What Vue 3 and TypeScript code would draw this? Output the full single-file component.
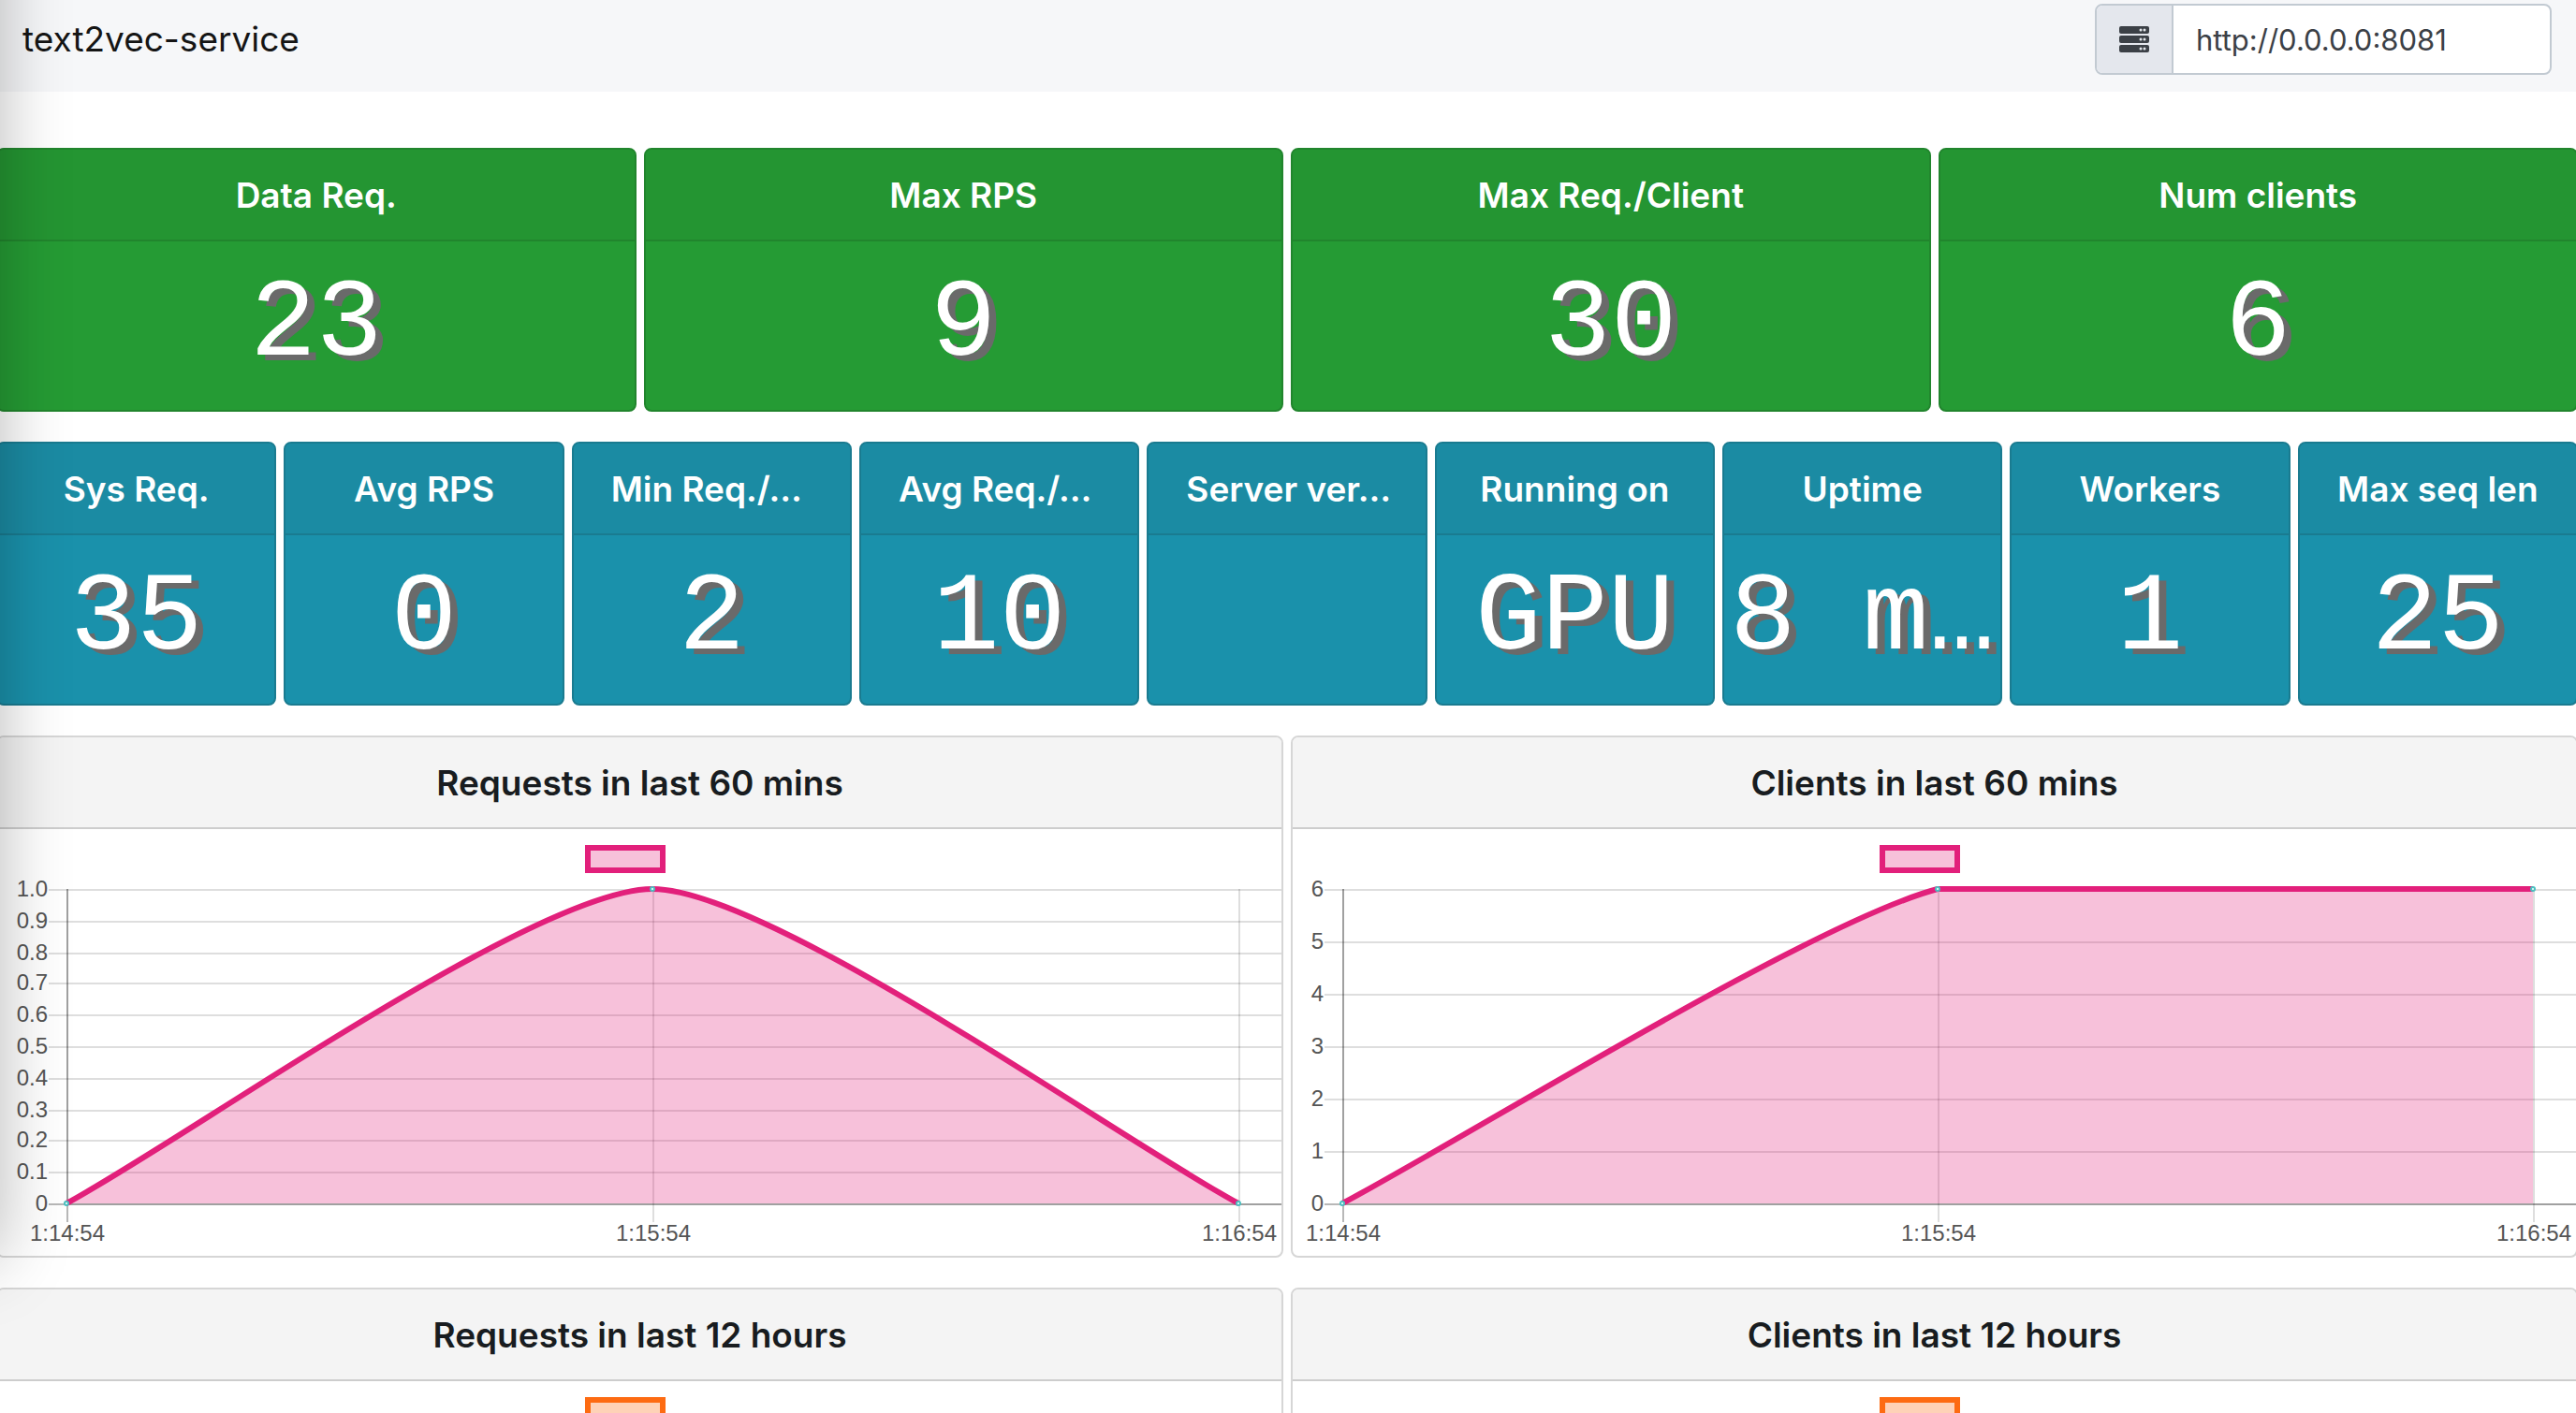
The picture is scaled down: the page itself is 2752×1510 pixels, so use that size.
<script setup lang="ts">
import { ref } from 'vue'

interface Stat {
  title: string
  value: string
  clipped?: boolean
}

interface ChartSpec {
  title: string
  tone: 'pink' | 'orange'
  left: number
  max: number
  ticks: string[]
  times: string[]
  values: number[]
}

interface Point {
  x: number
  y: number
}

const serverUrl = ref('http://0.0.0.0:8081')

const primaryStats: Stat[] = [
  { title: 'Data Req.', value: '23' },
  { title: 'Max RPS', value: '9' },
  { title: 'Max Req./Client', value: '30' },
  { title: 'Num clients', value: '6' },
]

const secondaryStats: Stat[] = [
  { title: 'Sys Req.', value: '35' },
  { title: 'Avg RPS', value: '0' },
  { title: 'Min Req./…', value: '2', clipped: true },
  { title: 'Avg Req./…', value: '10', clipped: true },
  { title: 'Server ver…', value: '', clipped: true },
  { title: 'Running on', value: 'GPU' },
  { title: 'Uptime', value: '8 m…' },
  { title: 'Workers', value: '1' },
  { title: 'Max seq len', value: '25' },
]

const charts: ChartSpec[] = [
  {
    title: 'Requests in last 60 mins',
    tone: 'pink',
    left: 73,
    max: 1,
    ticks: ['0', '0.1', '0.2', '0.3', '0.4', '0.5', '0.6', '0.7', '0.8', '0.9', '1.0'],
    times: ['1:14:54', '1:15:54', '1:16:54'],
    values: [0, 1, 0],
  },
  {
    title: 'Clients in last 60 mins',
    tone: 'pink',
    left: 53,
    max: 6,
    ticks: ['0', '1', '2', '3', '4', '5', '6'],
    times: ['1:14:54', '1:15:54', '1:16:54'],
    values: [0, 6, 6],
  },
  { title: 'Requests in last 12 hours', tone: 'orange', left: 73, max: 1, ticks: [], times: [], values: [] },
  { title: 'Clients in last 12 hours', tone: 'orange', left: 53, max: 1, ticks: [], times: [], values: [] },
]

const WIDTH = 1371
const HEIGHT = 456
const TOP = 64
const BOTTOM = 400
const RIGHT = 1325
const TENSION = 0.2

const points = (c: ChartSpec): Point[] =>
  c.values.map((v, i) => ({
    x: c.left + ((RIGHT - c.left) * i) / (c.values.length - 1),
    y: BOTTOM - ((BOTTOM - TOP) * v) / c.max,
  }))

const clamp = (y: number) => Math.min(BOTTOM, Math.max(TOP, y))

// Smoothed line: control points follow the neighbours, clamped to the plot area.
function linePath(c: ChartSpec): string {
  const pts = points(c)
  const handles = pts.map((p, i) => {
    const prev = pts[i - 1] ?? p
    const next = pts[i + 1] ?? p
    const before = Math.hypot(p.x - prev.x, p.y - prev.y)
    const after = Math.hypot(next.x - p.x, next.y - p.y)
    const a = (TENSION * before) / (before + after)
    const b = (TENSION * after) / (before + after)
    const dx = next.x - prev.x
    const dy = next.y - prev.y
    return {
      inX: p.x - a * dx,
      inY: clamp(p.y - a * dy),
      outX: p.x + b * dx,
      outY: clamp(p.y + b * dy),
    }
  })
  return pts
    .map((p, i) =>
      i === 0
        ? `M${p.x} ${p.y}`
        : `C${handles[i - 1].outX} ${handles[i - 1].outY} ${handles[i].inX} ${handles[i].inY} ${p.x} ${p.y}`,
    )
    .join(' ')
}

const areaPath = (c: ChartSpec) => `${linePath(c)} L${RIGHT} ${BOTTOM} L${c.left} ${BOTTOM} Z`

const gridY = (c: ChartSpec, i: number) =>
  2 * Math.round((BOTTOM - ((BOTTOM - TOP) * i) / (c.ticks.length - 1)) / 2) + 1

const gridX = (c: ChartSpec, i: number) => c.left + 1 + ((RIGHT - c.left) * i) / (c.times.length - 1)
</script>

<template>
  <div class="shell">
    <header class="topbar">
      <h1 class="brand">text2vec-service</h1>
      <div class="address">
        <label class="address-icon" for="server-url" aria-label="Server address">
          <svg viewBox="0 0 32 32" aria-hidden="true">
            <g fill="#3b4046">
              <rect x="0" y="2" width="32" height="8" rx="2" />
              <rect x="0" y="12" width="32" height="8" rx="2" />
              <rect x="0" y="22" width="32" height="8" rx="2" />
            </g>
            <g fill="#e4e7ed">
              <circle cx="23" cy="6" r="1.5" />
              <circle cx="27" cy="6" r="1.5" />
              <circle cx="23" cy="16" r="1.5" />
              <circle cx="27" cy="16" r="1.5" />
              <circle cx="23" cy="26" r="1.5" />
              <circle cx="27" cy="26" r="1.5" />
            </g>
          </svg>
        </label>
        <input id="server-url" v-model="serverUrl" class="address-input" type="text" />
      </div>
    </header>

    <main class="board">
      <section class="row row-primary">
        <article v-for="s in primaryStats" :key="s.title" class="card stat green">
          <h2 class="card-title">{{ s.title }}</h2>
          <p class="value">{{ s.value }}</p>
        </article>
      </section>

      <section class="row row-secondary">
        <article v-for="s in secondaryStats" :key="s.title" class="card stat teal">
          <h2 class="card-title" :class="{ clipped: s.clipped }">{{ s.title }}</h2>
          <p class="value">{{ s.value }}</p>
        </article>
      </section>

      <section class="row row-charts">
        <article v-for="c in charts" :key="c.title" class="card chart" :class="c.tone">
          <h2 class="card-title">{{ c.title }}</h2>
          <svg class="plot" :viewBox="`0 0 ${WIDTH} ${HEIGHT}`" role="img" :aria-label="c.title">
            <rect class="legend" x="630" y="20" width="80" height="24" />
            <template v-if="c.values.length">
              <g class="grid">
                <line
                  v-for="(t, i) in c.ticks"
                  :key="t"
                  :class="{ zero: i === 0 }"
                  :x1="c.left - 19"
                  :x2="WIDTH"
                  :y1="gridY(c, i)"
                  :y2="gridY(c, i)"
                />
                <line
                  v-for="(t, i) in c.times"
                  :key="t"
                  :class="{ zero: i === 0 }"
                  :x1="gridX(c, i)"
                  :x2="gridX(c, i)"
                  :y1="TOP"
                  :y2="BOTTOM + 20"
                />
                <line :x1="c.left + 1" :x2="c.left + 1" :y1="TOP" :y2="BOTTOM" />
                <line :x1="c.left" :x2="WIDTH" :y1="BOTTOM + 1" :y2="BOTTOM + 1" />
              </g>
              <path class="area" :d="areaPath(c)" />
              <path class="line" :d="linePath(c)" />
              <circle v-for="(p, i) in points(c)" :key="i" class="dot" :cx="p.x" :cy="p.y" r="2" />
              <g class="labels">
                <text
                  v-for="(t, i) in c.ticks"
                  :key="t"
                  :x="c.left - 20"
                  :y="gridY(c, i) + 7"
                  text-anchor="end"
                >{{ t }}</text>
                <text
                  v-for="(t, i) in c.times"
                  :key="t"
                  :x="gridX(c, i)"
                  :y="BOTTOM + 40"
                  text-anchor="middle"
                >{{ t }}</text>
              </g>
            </template>
          </svg>
        </article>
      </section>
    </main>
    <div class="side-panel" aria-hidden="true"></div>
  </div>
</template>

<style>
body {
  margin: 0;
  background: #fff;
}
</style>

<style scoped>
.shell {
  position: relative;
  height: 100vh;
  overflow: hidden;
  background: #fff;
  color: #181c20;
  font-family: Inter, 'Liberation Sans', sans-serif;
}

.topbar {
  display: flex;
  align-items: center;
  justify-content: space-between;
  padding: 4px 26px 18px 24px;
  background: #f6f7f9;
}

.brand {
  margin: 0;
  color: #151515;
  font-size: 37px;
  font-weight: 400;
  line-height: 60px;
}

.address {
  display: flex;
  box-sizing: border-box;
  width: 488px;
  height: 76px;
  overflow: hidden;
  border: 2px solid #c2cad2;
  border-radius: 8px;
  background: #fff;
}

.address-icon {
  display: flex;
  align-items: center;
  justify-content: center;
  width: 80px;
  border-right: 2px solid #c2cad2;
  background: #e4e7ed;
}

.address-icon svg {
  width: 32px;
  height: 32px;
}

.address-input {
  flex: 1;
  min-width: 0;
  padding: 0 24px;
  border: 0;
  outline: 0;
  background: transparent;
  color: #3b4046;
  font-family: inherit;
  font-size: 31px;
}

.board {
  display: flex;
  flex-direction: column;
  gap: 32px;
  margin: 0 -2px 0 -4px;
  padding-top: 60px;
}

.row {
  display: grid;
  gap: 32px 8px;
}

.row-primary {
  grid-template-columns: repeat(4, minmax(0, 1fr));
}

.row-secondary {
  grid-template-columns: repeat(9, minmax(0, 1fr));
}

.row-charts {
  grid-template-columns: repeat(2, minmax(0, 1fr));
}

.card {
  overflow: hidden;
  border: 2px solid #d6d6d6;
  border-radius: 8px;
  background: #fff;
}

.card-title {
  margin: 0;
  padding: 25px 36px 23px;
  border-bottom: 2px solid #cdcdcd;
  background: #f4f4f4;
  font-size: 37px;
  font-weight: 600;
  line-height: 48px;
  text-align: center;
  white-space: nowrap;
}

.card-title.clipped {
  padding-left: 40px;
  text-align: left;
}

.stat,
.stat .card-title {
  color: #fff;
}

.green,
.green .card-title {
  border-color: #21852d;
}

.green {
  background: #259b34;
}

.green .card-title {
  background: #249532;
}

.teal,
.teal .card-title {
  border-color: #1a7b90;
}

.teal {
  background: #1a91ab;
}

.teal .card-title {
  background: #1b8ba3;
}

.value {
  height: 180px;
  margin: 0;
  font-family: 'Courier New', 'Liberation Mono', monospace;
  font-size: 118px;
  line-height: 180px;
  text-align: center;
  text-shadow: 8px 6px 0 #6a6a6a;
  white-space: nowrap;
}

.pink {
  --line: #e2207b;
  --fill: rgba(226, 32, 123, 0.28);
}

.orange {
  --line: #fd6b12;
  --fill: rgba(253, 107, 18, 0.3);
}

.plot {
  display: block;
  width: 100%;
  height: auto;
}

.legend {
  fill: var(--fill);
  stroke: var(--line);
  stroke-width: 6px;
}

.grid line {
  stroke: rgba(0, 0, 0, 0.13);
  stroke-width: 2px;
}

.grid .zero {
  stroke: rgba(0, 0, 0, 0.28);
}

.area {
  fill: var(--fill);
}

.line {
  fill: none;
  stroke: var(--line);
  stroke-width: 6px;
}

.dot {
  fill: #fff;
  stroke: #4bc0c0;
  stroke-width: 2px;
}

.labels {
  fill: #555;
  font-family: 'Liberation Sans', Helvetica, Arial, sans-serif;
  font-size: 24px;
}

/* Panel parked outside the left edge; only its soft shadow falls on the page */
.side-panel {
  position: absolute;
  top: -100px;
  bottom: 165px;
  left: -200px;
  width: 200px;
  box-shadow: 0 0 75px rgba(0, 0, 0, 0.28);
  pointer-events: none;
}
</style>
